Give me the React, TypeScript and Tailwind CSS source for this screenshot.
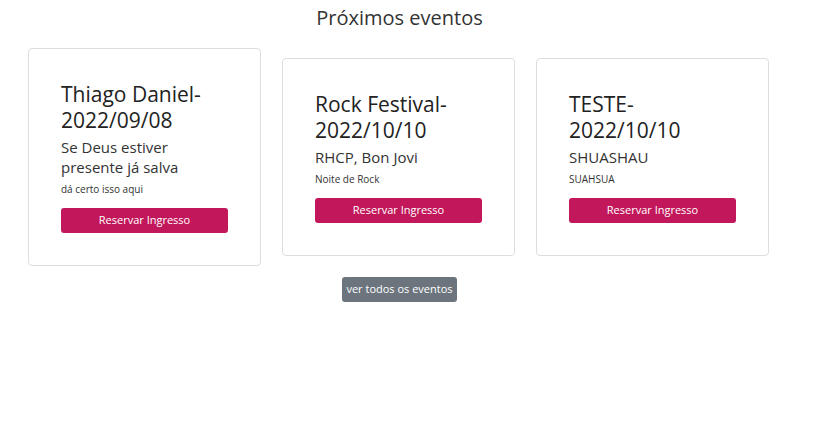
const eventos = [
  {
    titulo: "Thiago Daniel-",
    data: "2022/09/08",
    atracao: "Se Deus estiver presente já salva",
    descricao: "dá certo isso aqui",
  },
  {
    titulo: "Rock Festival-",
    data: "2022/10/10",
    atracao: "RHCP, Bon Jovi",
    descricao: "Noite de Rock",
  },
  {
    titulo: "TESTE-",
    data: "2022/10/10",
    atracao: "SHUASHAU",
    descricao: "SUAHSUA",
  },
];

export default function App() {
  return (
    <div
      className="min-h-screen bg-white text-[#212529]"
      style={{ fontFamily: '"Open Sans", sans-serif' }}
    >
      <div className="w-[799px] flex flex-col items-center">
        <h2 className="mt-[5px] text-[20px] leading-[26px] text-[#333]">Próximos eventos</h2>
        <div className="mt-[17px] flex items-center justify-center gap-[21px] pr-[2px]">
          {eventos.map((e) => (
            <div
              key={e.titulo}
              className="w-[233px] rounded-[4px] border border-[#dedede] px-[32px] py-[32px]"
            >
              <h3 className="text-[21px] leading-[26px] text-[#222]">
                {e.titulo}
                <br />
                {e.data}
              </h3>
              <p className="mt-[4px] text-[15px] leading-[20px] text-[#333]">{e.atracao}</p>
              <p className="mt-[5px] text-[10px] leading-[14px] text-[#333]">{e.descricao}</p>
              <button className="mt-[12px] h-[25px] w-full rounded-[3px] bg-[#c2185b] text-[11px] text-white">
                Reservar Ingresso
              </button>
            </div>
          ))}
        </div>
        <button className="mt-[11px] h-[25px] w-[115px] rounded-[3px] bg-[#6c757d] text-[11px] text-white">
          ver todos os eventos
        </button>
      </div>
    </div>
  );
}
